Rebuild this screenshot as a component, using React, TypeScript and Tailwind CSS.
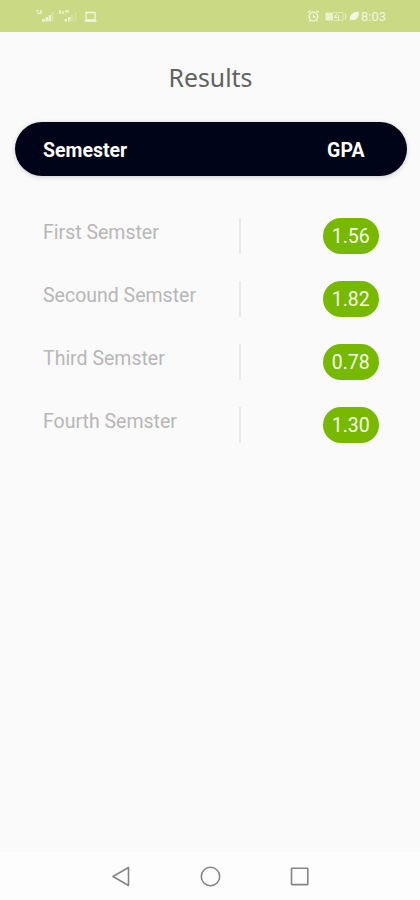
const results = [
  { semester: "First Semster", gpa: "1.56" },
  { semester: "Secound Semster", gpa: "1.82" },
  { semester: "Third Semster", gpa: "0.78" },
  { semester: "Fourth Semster", gpa: "1.30" },
];

function StatusBar() {
  return (
    <div className="flex h-8 shrink-0 items-center justify-between bg-[#c9d984] pl-[35px] pr-[34px] text-[#f3f6e0]">
      <svg width="64" height="16" viewBox="0 0 64 16" fill="currentColor">
        {/* Signal strength, both SIM cards */}
        <path d="M1 2h3v1.500H1zM2 4.500h3V6H2zM5 2h2v4H5z" opacity=".7" />
        <path d="M7 11h3v2.500H7zM10.500 9H13v4.500h-2.500zM13.500 7H16v6.500h-2.500z" opacity=".85" />
        <path d="M16.500 4h2v9.500h-2z" opacity=".4" />
        <path d="M24 2h2v4h-2zM27 3h2v3h-2zM30 2h4v2.500h-4z" opacity=".7" />
        <path d="M29.500 11h2.500v2.500h-2.500zM33 9h2.500v4.500H33z" opacity=".85" />
        <path d="M36 7h2.500v6.500H36zM39.500 4h2v9.500h-2z" opacity=".3" />
        <path d="M51 4.500h9v7.500h-9zM49.500 13h12" fill="none" stroke="currentColor" strokeWidth="1.3" />
      </svg>
      <div className="flex items-center">
        <svg width="54" height="16" viewBox="0 0 54 16" fill="none" stroke="currentColor" strokeWidth="1.3">
          {/* Alarm */}
          <circle cx="6.500" cy="8.500" r="4.300" />
          <path d="M6.500 6v3h2M1 4.500l2.500-2M12 4.500l-2.500-2M3.500 12l-1 1.500M9.500 12l1 1.500" />
          {/* Battery */}
          <path d="M18.500 4.500h7.500v8h-7.500z" fill="currentColor" stroke="none" opacity=".8" />
          <path d="M26 4.500h10v8H26" strokeWidth=".8" opacity=".7" />
          <path d="M30 5.500l-2.500 4h5M31.500 7v5M38 5.500q2.500 3 0 6" strokeWidth="1" />
          {/* Power saving leaf */}
          <path d="M43 13c-1-5 1-9 9-9.500 0 7-4 10-7.500 8z" fill="currentColor" stroke="none" />
        </svg>
        <span className="pt-px text-[13px] leading-4">8:03</span>
      </div>
    </div>
  );
}

function ResultRow({ semester, gpa }: { semester: string; gpa: string }) {
  return (
    <li className="flex h-9 items-start">
      <span className="w-[196px] whitespace-nowrap pt-[3px] text-[19.5px] leading-6 text-[#b8b6b6]">
        {semester}
      </span>
      <span className="h-9 w-[2px] bg-[#e9e9e9]" />
      <span className="ml-[81.5px] flex h-[35.5px] w-[56.5px] items-center justify-center rounded-full bg-[#76b900] pt-px text-[19.5px] text-[#f6fbe9]">
        {gpa}
      </span>
    </li>
  );
}

function NavigationBar() {
  return (
    <nav className="flex h-12 shrink-0 items-center justify-between bg-[#fdfdfd] px-[110px]">
      <svg width="22" height="22" viewBox="0 0 22 22" fill="none" stroke="#858585" strokeWidth="1.6" strokeLinejoin="round">
        <path d="M18.500 2.500v18L3 11.500z" />
      </svg>
      <svg width="22" height="22" viewBox="0 0 22 22" fill="none" stroke="#858585" strokeWidth="1.6">
        <circle cx="11.500" cy="11.500" r="9.200" />
      </svg>
      <svg width="22" height="22" viewBox="0 0 22 22" fill="none" stroke="#858585" strokeWidth="1.6">
        <rect x="3.500" y="3.300" width="16.300" height="16.300" rx=".5" />
      </svg>
    </nav>
  );
}

export default function App() {
  return (
    <div className="flex h-[900px] w-[420px] flex-col bg-[#fafafa] font-['Roboto',sans-serif]">
      <StatusBar />
      <main className="flex-1">
        <h1 className="pl-px pt-[29px] text-center font-['Noto_Sans',sans-serif] text-[24.8px] leading-8 text-[#626262]">
          Results
        </h1>
        <div className="ml-[14.5px] mr-[13.5px] mt-[29px] flex h-[54px] items-center justify-between rounded-full bg-[#000418] pl-[28.5px] pr-[42px] pt-[3px] text-[19.5px] font-bold text-white shadow-[0_1px_5px_rgba(0,0,0,0.18)]">
          <span>Semester</span>
          <span>GPA</span>
        </div>
        <ul className="flex flex-col gap-[27px] pl-[43px] pt-[42px]">
          {results.map((result) => (
            <ResultRow key={result.semester} {...result} />
          ))}
        </ul>
      </main>
      <NavigationBar />
    </div>
  );
}
